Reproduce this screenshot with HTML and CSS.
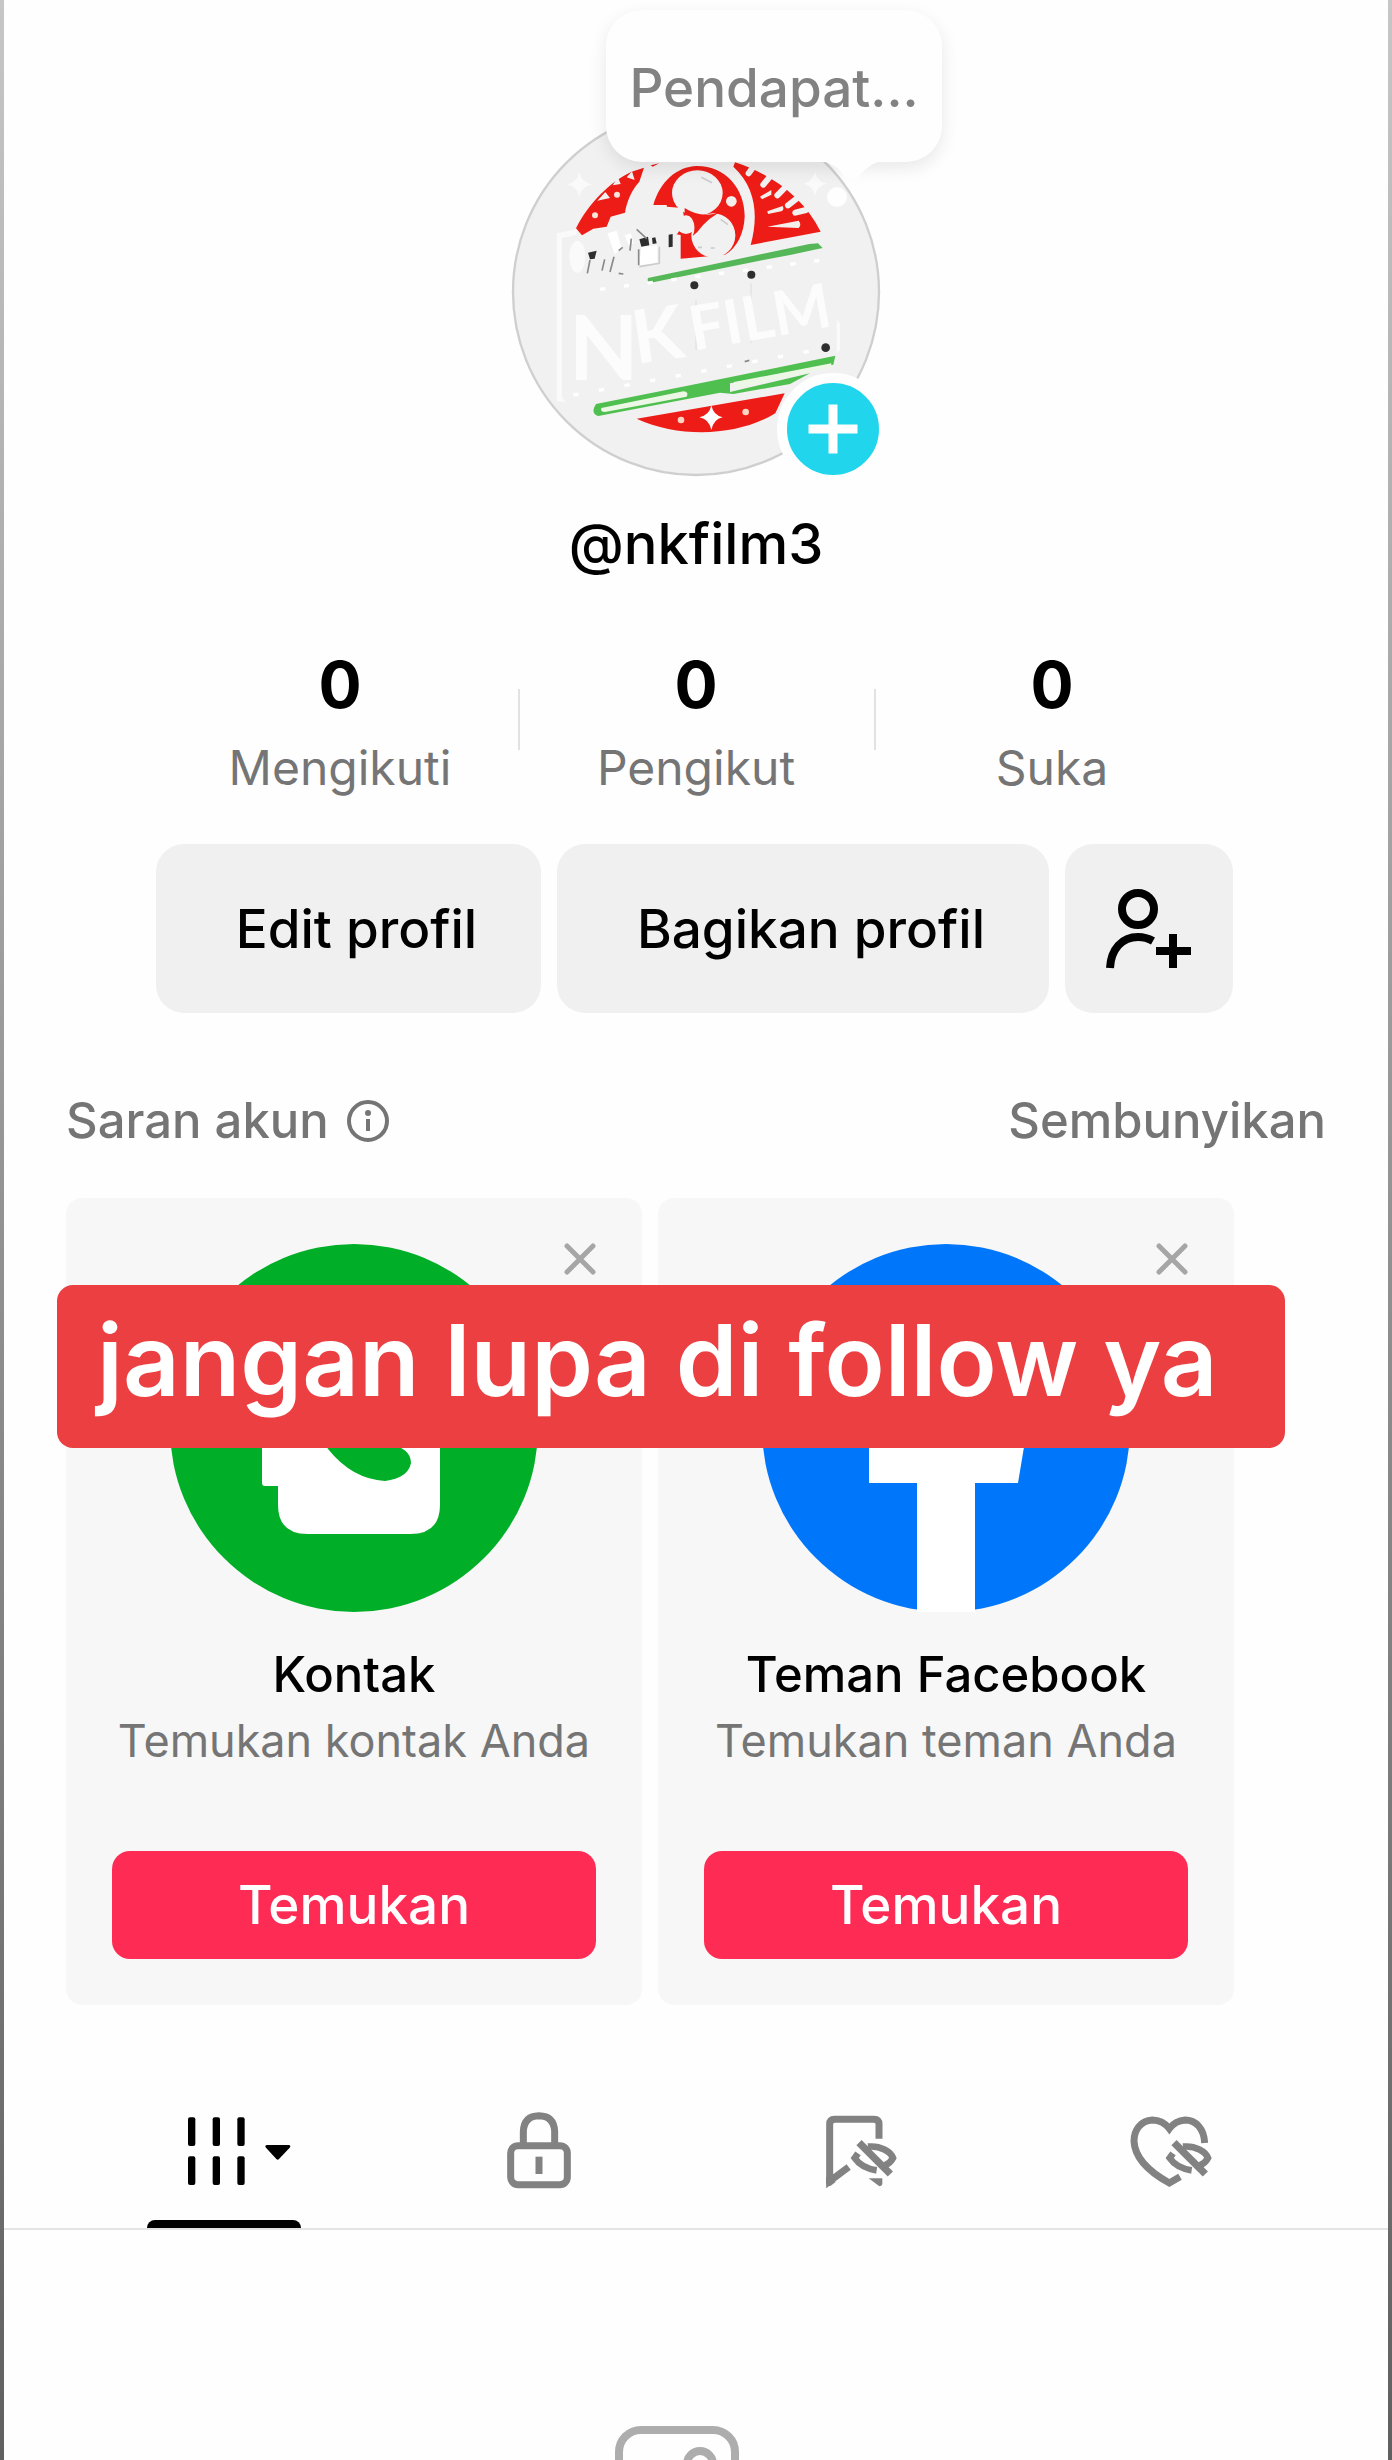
FILE: index.html
```html
<!DOCTYPE html>
<html lang="id">
<head>
<meta charset="utf-8">
<meta name="viewport" content="width=device-width, initial-scale=1">
<title>@nkfilm3</title>
<link rel="stylesheet" href="styles.css">
</head>
<body>
<main class="shell">
  <header class="profile">
    <div class="avatar">
      <svg class="avatar-art" viewBox="66 324 1104 1104" aria-hidden="true">
        <circle cx="618" cy="876" r="549" fill="#f1f1f1" stroke="#cfcfcf" stroke-width="7"/>
        <g fill="#fafafa">
          <path d="M268 515q6 32 38 38q-32 6-38 38q-6-32-38-38q32-6 38-38zM975 515q5 28 34 36q-29 6-34 38q-5-32-34-38q29-8 34-36z"/>
          <path d="M200 700l60-12v16l-44 10v480l14 14-30-6zM1040 960l10 10v80l-10 10z"/>
          <ellipse cx="262" cy="770" rx="24" ry="48"/>
        </g>
        <path d="M258 685C295 610 360 545 425 515L462 503L448 545C425 570 410 605 405 638L362 650L350 680L310 686L276 706z" fill="#ee1c16"/>
        <path d="M322 602l38-8-14-18zM368 556l24-4-8-20zM410 532l24 8-8-26z" fill="#f1f1f1"/>
        <circle cx="381" cy="584" r="9" fill="#fbe5da"/><circle cx="315" cy="646" r="9" fill="#fbe5da"/>
        <path d="M482 496l26-6-20 10z" fill="#ee1c16"/>
        <path d="M490 615C510 545 560 500 620 498C710 498 765 570 764 650C762 700 740 745 705 764L572 776V705L540 700L530 615z" fill="#ee1c16"/>
        <path d="M735 487C840 520 940 590 992 695L782 735C805 650 800 565 730 500z" fill="#ee1c16"/>
        <g stroke="#f1f1f1" stroke-width="18" stroke-linecap="round">
          <path d="M792 498l-16 22M838 532l-18 22M882 566l-20 20M920 596l-26 20M948 630l-32 8"/>
        </g>
        <g fill="#f5efec">
          <path d="M810 590l34-20v14l-28 14zM832 634l46-16q6 12-4 16l-40 8zM832 680l94-18q10 12 0 22z"/>
          <circle cx="724" cy="604" r="16"/>
        </g>
        <g fill="#f1f1f1">
          <ellipse cx="622" cy="579" rx="76" ry="68"/>
          <ellipse cx="670" cy="706" rx="66" ry="66"/>
          <circle cx="588" cy="674" r="28"/>
          <path d="M500 618l78 6 6 44-24 36-70-10z"/>
        </g>
        <path d="M584 624Q640 660 700 632Q655 650 622 696L608 708Q620 680 606 656Q590 640 584 640z" fill="#ee1c16"/>
        <path d="M474 834L958 732L984 730L998 744L900 765L820 780L482 848Q470 848 474 834z" fill="#56b758"/>
        <g fill="#2e2e2e">
          <path d="M448 718l26-8 4 26-24 4zM486 714l10-2 4 18-12 2zM536 704l12-2v38l-12 2zM294 758l26-6-6 24-14 2z"/>
          <circle cx="613" cy="856" r="12"/><circle cx="784" cy="824" r="12"/><circle cx="1007" cy="1043" r="13"/>
        </g>
        <g fill="#fff">
          <path d="M352 700l28-8 16 56-22 14zM404 706l18-6 10 30-16 6zM454 742l48-6v54l-54 6z"/>
        </g>
        <g fill="none" stroke="#8a8a8a" stroke-width="5">
          <path d="M440 688l30 28M446 748v48M300 780l-8 40M344 778l-8 34M372 770l-12 46M424 716l-4 36M386 752l12-10M386 820l14 2M764 1085l14-4"/>
          <path d="M634 532l32 16M692 658l22 16M624 742h12M662 744h12M508 740v50l-60 10" stroke="#ccc"/>
          <path d="M618 900v150M783 850v180" stroke="#ddd" stroke-width="3"/>
        </g>
        <g class="film-word">
          <text x="236" y="1140" font-size="272">N</text>
          <text x="438" y="1092" font-size="222" transform="rotate(-8 438 1092)">K</text>
          <text x="610" y="1052" font-size="184" transform="rotate(-10 610 1052)">FILM</text>
        </g>
        <g fill="none" stroke="#fff" stroke-width="10">
          <path d="M330 868L1000 780" stroke-dasharray="16 56"/>
          <path d="M250 1185L990 1048" stroke-dasharray="16 62"/>
        </g>
        <path d="M318 1212L600 1156L1036 1067L1030 1094L720 1150V1176L960 1120L900 1152L730 1182L690 1178L325 1248Q300 1240 318 1212z" fill="#4fbf50"/>
        <path d="M334 1224L580 1174Q598 1176 590 1190L345 1236Q330 1236 334 1224z" fill="#edf7e6"/>
        <path d="M732 1146L1024 1090V1102L742 1164Q728 1162 732 1146z" fill="#edf7e6"/>
        <path d="M440 1256L884 1180L856 1240C740 1310 570 1315 440 1256z" fill="#ee1c16"/>
        <path d="M664 1216q6 30 34 36q-28 6-34 38q-6-32-36-38q30-6 36-36z" fill="#fff"/>
        <circle cx="573" cy="1260" r="10" fill="#fbd5c4"/><circle cx="767" cy="1236" r="10" fill="#fbd5c4"/>
      </svg>
      <svg class="thought-tail" viewBox="0 0 70 48" aria-hidden="true">
        <path d="M2 0H62Q52 2 46 8L38 16Q30 22 24 15Q18 4 2 0z" fill="#fefefe"/>
        <circle cx="17" cy="36" r="10" fill="#fefefe"/>
      </svg>
      <div class="thought">Pendapat...</div>
      <button class="add-story" type="button" aria-label="Tambah cerita">
        <svg viewBox="0 0 92 92" aria-hidden="true"><path d="M46 26v40M26 46h40" stroke="#fff" stroke-width="9" stroke-linecap="square" fill="none"/></svg>
      </button>
    </div>
    <h1 class="handle">@nkfilm3</h1>
    <ul class="stats">
      <li class="stat"><strong class="stat-count">0</strong><span class="stat-name">Mengikuti</span></li>
      <li class="stat"><strong class="stat-count">0</strong><span class="stat-name">Pengikut</span></li>
      <li class="stat"><strong class="stat-count">0</strong><span class="stat-name">Suka</span></li>
    </ul>
    <div class="actions">
      <button class="action action-edit" type="button">Edit profil</button>
      <button class="action action-share" type="button">Bagikan profil</button>
      <button class="action action-add" type="button" aria-label="Tambah teman">
        <svg width="88" height="84" viewBox="0 0 88 84" fill="none" stroke="#000" stroke-width="8" aria-hidden="true">
          <circle cx="33" cy="22" r="16"/>
          <path d="M5 81C6 62 17 50 33 50Q41 50 48 54M51 64h35M68 47v34"/>
        </svg>
      </button>
    </div>
  </header>

  <section class="suggestions">
    <div class="suggestions-head">
      <h2 class="suggestions-title">Saran akun
        <svg width="42" height="42" viewBox="0 0 42 42" aria-hidden="true"><circle cx="21" cy="21" r="19" fill="none" stroke="#757575" stroke-width="4"/><circle cx="21" cy="13" r="3" fill="#757575"/><path d="M21 19v12" stroke="#757575" stroke-width="4"/></svg>
      </h2>
      <button class="hide" type="button">Sembunyikan</button>
    </div>
    <div class="cards">
      <article class="card">
        <button class="dismiss" type="button" aria-label="Tutup"><svg viewBox="0 0 32 32" aria-hidden="true"><path d="M3 3l26 26M29 3L3 29"/></svg></button>
        <svg class="card-logo" viewBox="0 0 368 368" aria-hidden="true">
          <circle cx="184" cy="184" r="184" fill="#00af27"/>
          <path d="M108 110Q108 80 138 80H240Q270 80 270 110V261Q270 290 240 290H138Q108 290 108 261V242H95Q92 242 92 239V190H108z" fill="#fff"/>
          <path d="M150 130Q165 110 175 135L185 155L178 175Q190 195 205 203L218 200Q241 204 241 219Q238 234 215 237Q182 235 158 205Q138 170 150 130z" fill="#00af27"/>
        </svg>
        <h3 class="card-name">Kontak</h3>
        <p class="card-note">Temukan kontak Anda</p>
        <button class="find" type="button">Temukan</button>
      </article>
      <article class="card">
        <button class="dismiss" type="button" aria-label="Tutup"><svg viewBox="0 0 32 32" aria-hidden="true"><path d="M3 3l26 26M29 3L3 29"/></svg></button>
        <svg class="card-logo" viewBox="0 0 368 368" aria-hidden="true">
          <circle cx="184" cy="184" r="184" fill="#0076fb"/>
          <path d="M155 368V239H107V185H155V150Q155 90 215 90H256V138H230Q213 138 213 158V185H265L256 239H213V368z" fill="#fff"/>
        </svg>
        <h3 class="card-name">Teman Facebook</h3>
        <p class="card-note">Temukan teman Anda</p>
        <button class="find" type="button">Temukan</button>
      </article>
      <p class="caption">jangan lupa di follow ya</p>
    </div>
  </section>

  <nav class="tabs" aria-label="Konten profil">
    <button class="tab tab-active" type="button" aria-label="Postingan">
      <svg width="154" height="80" viewBox="49 90 462 240" aria-hidden="true">
        <g fill="#000"><rect x="172" y="112" width="22" height="86" rx="6"/><rect x="246" y="112" width="22" height="86" rx="6"/><rect x="320" y="112" width="22" height="86" rx="6"/><rect x="172" y="229" width="22" height="86" rx="6"/><rect x="246" y="229" width="22" height="86" rx="6"/><rect x="320" y="229" width="22" height="86" rx="6"/>
        <path d="M408 195H475Q482 197 477 203L445 237Q441 241 437 237L406 203Q401 197 408 195z"/></g>
      </svg>
    </button>
    <button class="tab" type="button" aria-label="Pribadi">
      <svg width="80" height="80" viewBox="1105 90 240 240" fill="none" stroke="#828282" stroke-width="21" aria-hidden="true">
        <rect x="1140" y="197" width="170" height="117" rx="22"/>
        <path d="M1178 190V154Q1180 108 1225 107Q1270 108 1272 154V190"/>
        <path d="M1225 230v52"/>
      </svg>
    </button>
    <button class="tab" type="button" aria-label="Favorit">
      <svg width="100" height="80" viewBox="70 90 300 240" aria-hidden="true">
        <path d="M295 176V133Q295 118 280 118H162Q147 118 147 133V304L204 261" fill="none" stroke="#828282" stroke-width="21"/>
        <path d="M136 290V310Q138 320 150 317L165 306zM264 295H305V312Q303 320 295 318z" fill="#828282"/>
        <g fill="none" stroke="#828282" stroke-width="20">
          <path d="M235 188L329 282" stroke-width="22"/>
          <path d="M262 200C300 196 330 215 337 234Q330 248 313 256"/>
          <path d="M232 220L222 234Q242 264 288 271"/>
        </g>
      </svg>
    </button>
    <button class="tab" type="button" aria-label="Disukai">
      <svg width="100" height="80" viewBox="1015 90 300 240" aria-hidden="true">
        <path d="M1272 189C1270 145 1245 120 1213 120Q1184 122 1166 146Q1146 120 1115 120C1080 122 1060 150 1060 183C1062 235 1110 278 1166 309L1198 290" fill="none" stroke="#828282" stroke-width="21"/>
        <g fill="none" stroke="#828282" stroke-width="20">
          <path d="M1180 188L1274 282" stroke-width="22"/>
          <path d="M1207 200C1245 196 1275 215 1282 234Q1275 248 1258 256"/>
          <path d="M1177 220L1167 234Q1187 264 1233 271"/>
        </g>
      </svg>
    </button>
  </nav>

  <section class="empty" aria-label="Belum ada postingan">
    <svg width="124" height="124" viewBox="0 0 124 124" fill="none" stroke="#adadad" stroke-width="8" aria-hidden="true">
      <rect x="4" y="4" width="116" height="116" rx="22"/>
      <circle cx="85" cy="38" r="13"/>
      <path d="M4 96l34-34 48 56"/>
    </svg>
  </section>
</main>
</body>
</html>
```
FILE: styles.css
```css
* {
  box-sizing: border-box;
}

body {
  margin: 0;
  padding: 0 4px;
  background: linear-gradient(#c6c6c6, #929292 50%, #606060);
  font-family: Inter, "Noto Sans", sans-serif;
  color: #000;
}

h1, h2, h3, p, ul {
  margin: 0;
  padding: 0;
}

button {
  padding: 0;
  border: 0;
  background: none;
  color: inherit;
  font: inherit;
}

svg {
  display: block;
}

.shell {
  display: flex;
  flex-direction: column;
  height: 100vh;
  overflow: hidden;
  background: #fefefe;
}

.profile {
  display: flex;
  flex-direction: column;
  align-items: center;
  padding-top: 108px;
}

.avatar {
  position: relative;
  width: 368px;
  height: 368px;
}

.avatar-art {
  width: 100%;
  height: 100%;
  overflow: visible;
}

.film-word {
  fill: #fcfcfc;
  font-family: Lato, sans-serif;
  font-weight: 700;
}

.thought {
  position: absolute;
  top: -98px;
  left: 94px;
  width: 336px;
  height: 152px;
  border-radius: 36px;
  background: #fefefe;
  box-shadow: 0 6px 18px rgba(0, 0, 0, 0.09);
  color: #828282;
  font-size: 53px;
  font-weight: 500;
  line-height: 156px;
  text-align: center;
}

.thought-tail {
  position: absolute;
  top: 53px;
  left: 308px;
  z-index: 1;
  width: 70px;
  height: 48px;
}

.add-story {
  position: absolute;
  right: -9px;
  bottom: -9px;
  width: 112px;
  height: 112px;
  border: 10px solid #fefefe;
  border-radius: 50%;
  background: #20d5ec;
}

.handle {
  margin-top: 36px;
  font-size: 56px;
  font-weight: 500;
  line-height: 64px;
}

.stats {
  display: flex;
  margin-top: 73px;
  list-style: none;
}

.stat {
  position: relative;
  display: flex;
  flex-direction: column;
  gap: 19px;
  align-items: center;
  width: 356px;
}

.stat + .stat::before {
  position: absolute;
  top: 40px;
  left: 0;
  width: 2px;
  height: 61px;
  background: #e2e2e2;
  content: "";
}

.stat-count {
  font-size: 64px;
  font-weight: 700;
  line-height: 72px;
}

.stat-name {
  color: #757575;
  font-size: 48px;
  line-height: 56px;
}

.actions {
  display: flex;
  gap: 16px;
  justify-content: center;
  margin-top: 48px;
  padding-right: 3px;
}

.action {
  display: flex;
  align-items: center;
  justify-content: center;
  height: 169px;
  border-radius: 28px;
  background: #f0f0f0;
  font-size: 53px;
  font-weight: 500;
}

.action-edit {
  width: 385px;
  padding-left: 16px;
}

.action-share {
  width: 492px;
  padding-left: 16px;
}

.action-add {
  width: 168px;
}

.suggestions {
  padding: 80px 62px 0;
}

.suggestions-head {
  display: flex;
  justify-content: space-between;
  color: #757575;
  font-size: 49px;
  font-weight: 500;
  line-height: 56px;
}

.suggestions-title {
  display: flex;
  gap: 18px;
  align-items: center;
  font: inherit;
}

.cards {
  position: relative;
  display: flex;
  gap: 16px;
  margin-top: 49px;
}

.card {
  position: relative;
  display: flex;
  flex: 0 1 576px;
  flex-direction: column;
  align-items: center;
  padding: 46px;
  border-radius: 16px;
  background: #f7f7f7;
}

.card-logo {
  width: 368px;
  height: 368px;
}

.dismiss {
  position: absolute;
  top: 45px;
  right: 46px;
  width: 32px;
  height: 32px;
}

.dismiss path {
  fill: none;
  stroke: #a6a6a6;
  stroke-width: 5;
  stroke-linecap: round;
}

.card-name {
  margin-top: 35px;
  font-size: 49px;
  font-weight: 500;
  line-height: 56px;
}

.card-note {
  margin-top: 10px;
  color: #757575;
  font-size: 45px;
  line-height: 56px;
  white-space: nowrap;
}

.find {
  width: 100%;
  height: 108px;
  margin-top: 82px;
  border-radius: 18px;
  background: #fe2b55;
  color: #fff;
  font-size: 53px;
  font-weight: 500;
}

.caption {
  position: absolute;
  top: 87px;
  right: 41px;
  left: -9px;
  height: 163px;
  padding-left: 40px;
  border-radius: 16px;
  background: #eb3f42;
  color: #fff;
  font-size: 99px;
  font-weight: 600;
  line-height: 150px;
  white-space: nowrap;
}

.tabs {
  display: flex;
  margin-top: 105px;
  padding: 0 62px;
  border-bottom: 2px solid #e4e4e4;
}

.tab {
  display: flex;
  flex: 1;
  flex-direction: column;
  align-items: center;
  height: 118px;
}

.tab-active::after {
  width: 154px;
  height: 8px;
  margin-top: 30px;
  border-radius: 8px 8px 0 0;
  background: #000;
  content: "";
}

.empty {
  display: flex;
  flex: 1;
  justify-content: center;
  min-height: 0;
  padding: 196px 38px 0 0;
  overflow: hidden;
}

.empty svg {
  flex: none;
}
```
